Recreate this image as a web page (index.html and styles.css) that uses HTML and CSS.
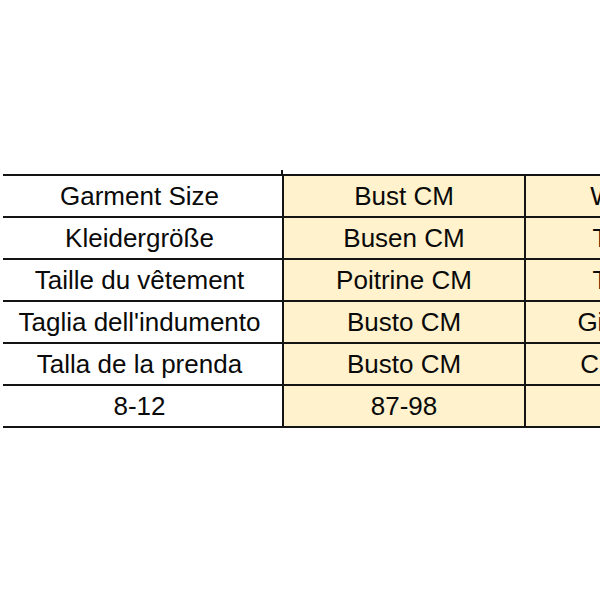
FILE: index.html
```html
<!DOCTYPE html>
<html lang="en">
<head>
<meta charset="utf-8">
<title>Size chart</title>
<link rel="stylesheet" href="styles.css">
</head>
<body>
<div class="page">
  <table class="chart">
    <colgroup>
      <col class="c1"><col class="c2"><col class="c3">
    </colgroup>
    <tbody>
      <tr><td class="lbl tick">Garment Size</td><td class="hl">Bust CM</td><td class="hl">Waist CM</td></tr>
      <tr><td class="lbl">Kleidergröße</td><td class="hl">Busen CM</td><td class="hl">Taille CM</td></tr>
      <tr><td class="lbl">Taille du vêtement</td><td class="hl">Poitrine CM</td><td class="hl">Taille CM</td></tr>
      <tr><td class="lbl">Taglia dell'indumento</td><td class="hl">Busto CM</td><td class="hl">Girovita CM</td></tr>
      <tr><td class="lbl">Talla de la prenda</td><td class="hl">Busto CM</td><td class="hl">Cintura CM</td></tr>
      <tr><td class="lbl">8-12</td><td class="hl">87-98</td><td class="hl"></td></tr>
    </tbody>
  </table>
</div>
</body>
</html>
```

FILE: styles.css
```css
html, body {
  margin: 0;
  padding: 0;
  background: #ffffff;
  overflow: hidden;
  width: 600px;
  height: 600px;
}

.page {
  padding-top: 174px;
  padding-left: 3px;
  width: 900px;
}

.chart {
  border-collapse: collapse;
  table-layout: fixed;
  width: 764px;
  font-family: "Liberation Sans", Arial, sans-serif;
  font-size: 26px;
  color: #0a0a0a;
}

.c1 { width: 280px; }
.c2 { width: 242px; }
.c3 { width: 242px; }

.chart tr {
  height: 42px;
}

.chart td {
  padding: 0;
  text-align: center;
  vertical-align: middle;
  border-top: 2px solid #141414;
  border-bottom: 2px solid #141414;
  border-right: 2px solid #141414;
  white-space: nowrap;
  line-height: 28px;
}

.chart td.lbl {
  padding-right: 6px;
}

.chart td.hl {
  background: #fff2cc;
}

.chart td.tick {
  position: relative;
}

.chart td.tick::after {
  content: "";
  position: absolute;
  right: -1px;
  top: -6px;
  width: 2px;
  height: 6px;
  background: #141414;
}
```
